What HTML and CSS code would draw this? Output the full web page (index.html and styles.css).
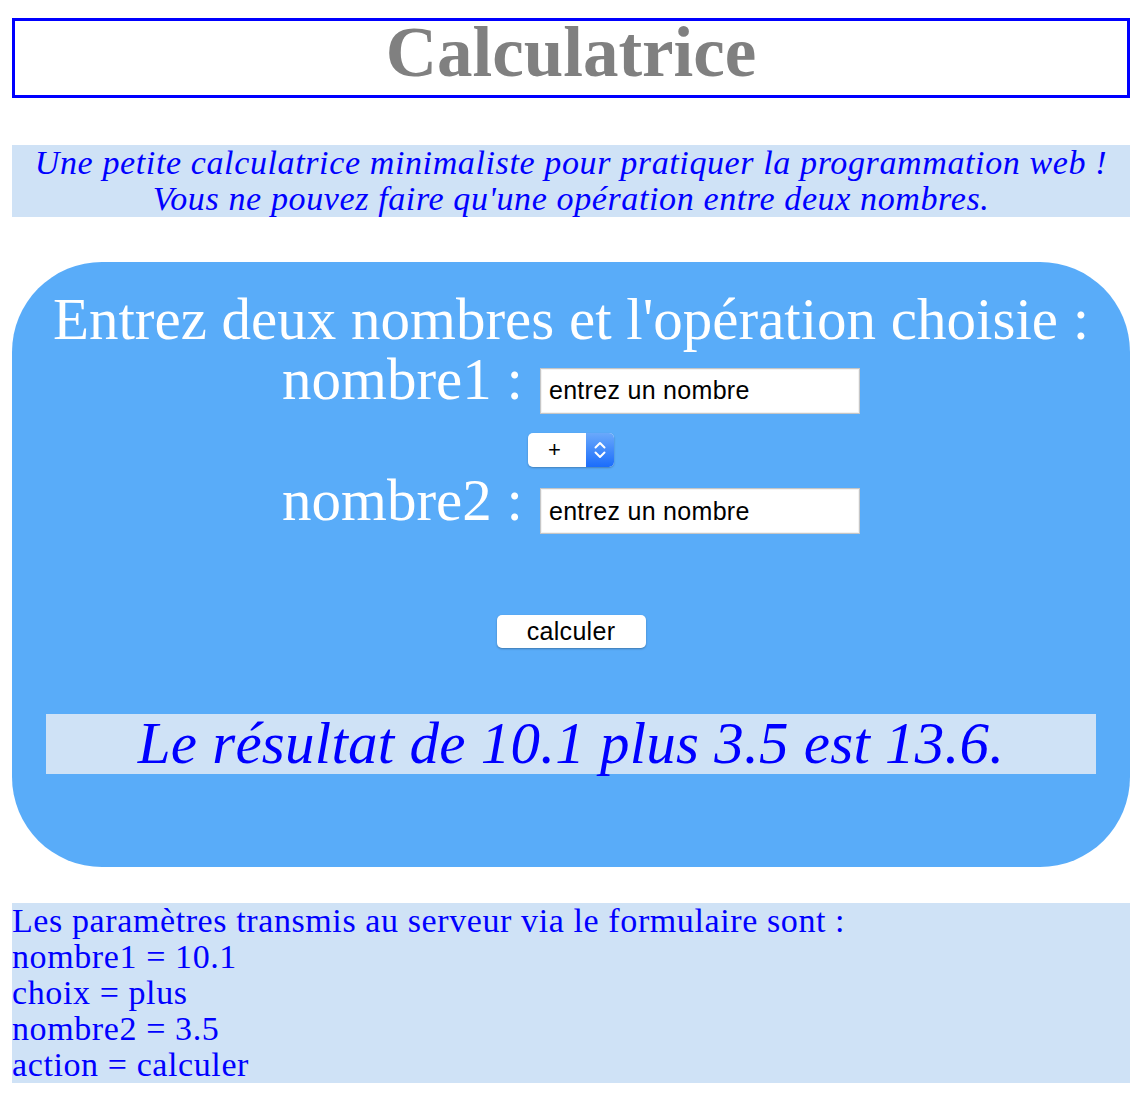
FILE: index.html
```html
<!DOCTYPE html>
<html lang="fr">
<head>
<meta charset="utf-8">
<title>Calculatrice</title>
<link rel="stylesheet" href="styles.css">
</head>
<body>
<h1 class="title">Calculatrice</h1>
<p class="intro">Une petite calculatrice minimaliste pour pratiquer la programmation web !<br>Vous ne pouvez faire qu'une opération entre deux nombres.</p>
<form class="panel">
  <div class="panel-title">Entrez deux nombres et l'opération choisie :</div>
  <div class="row row1">
    <label class="lbl" for="n1">nombre1 :</label>
    <input class="num" id="n1" type="text" value="entrez un nombre">
  </div>
  <div class="select-wrap">
    <select class="op"><option>+</option></select>
    <span class="arrows"><svg width="14" height="20" viewBox="0 0 14 20"><path d="M2.5 7.5 L7 3 L11.5 7.5 M2.5 12.5 L7 17 L11.5 12.5" fill="none" stroke="#fff" stroke-width="2" stroke-linecap="round" stroke-linejoin="round"/></svg></span>
  </div>
  <div class="row row2">
    <label class="lbl" for="n2">nombre2 :</label>
    <input class="num" id="n2" type="text" value="entrez un nombre">
  </div>
  <button type="button" class="btn">calculer</button>
  <div class="result">Le résultat de 10.1 plus 3.5 est 13.6.</div>
</form>
<div class="params">Les paramètres transmis au serveur via le formulaire sont :<br>nombre1 = 10.1<br>choix = plus<br>nombre2 = 3.5<br>action = calculer</div>
</body>
</html>
```

FILE: styles.css
```css
html, body {
  background: #ffffff;
}
body {
  margin: 0;
  padding: 18px 16px 20px 12px;
  font-family: "Liberation Serif", "Times New Roman", serif;
}
.title {
  margin: 0;
  border: 3px solid #0000ff;
  height: 74px;
  line-height: 63px;
  text-align: center;
  color: #808080;
  font-size: 71px;
  font-weight: bold;
}
.intro {
  margin: 47px 0 0;
  background: #cfe2f6;
  color: #0000ff;
  font-style: italic;
  font-size: 34px;
  letter-spacing: 0.62px;
  line-height: 36px;
  text-align: center;
}
.panel {
  margin-top: 45px;
  background: #59acf9;
  border-radius: 90px;
  padding: 27px 0 93px;
  display: flex;
  flex-direction: column;
  align-items: center;
}
.panel-title {
  color: #ffffff;
  font-size: 59px;
  line-height: 60px;
  white-space: nowrap;
}
.row {
  display: flex;
  align-items: baseline;
  gap: 17px;
}
.row2 {
  margin-top: 3px;
}
.lbl {
  color: #ffffff;
  font-size: 59px;
  line-height: 60px;
}
.num {
  box-sizing: border-box;
  width: 320px;
  height: 46px;
  margin: 0;
  padding: 0 8px;
  border: 1px solid #c6c6c6;
  box-shadow: inset 0 0 0 1px #f2f2f2;
  background: #ffffff;
  font-family: "Liberation Sans", Arial, sans-serif;
  font-size: 25px;
  letter-spacing: 0.3px;
  color: #000000;
}
.select-wrap {
  position: relative;
  margin-top: 19px;
  width: 86px;
  height: 34px;
  border-radius: 5px;
  box-shadow: 0 1px 2px rgba(0, 0, 0, 0.25);
}
.op {
  -webkit-appearance: none;
  appearance: none;
  box-sizing: border-box;
  width: 86px;
  height: 34px;
  margin: 0;
  padding: 0 0 0 20px;
  border: none;
  border-radius: 5px;
  background: #ffffff;
  font-family: "Liberation Sans", Arial, sans-serif;
  font-size: 22px;
  color: #000000;
}
.arrows {
  position: absolute;
  top: 0;
  right: 0;
  width: 28px;
  height: 34px;
  border-radius: 0 5px 5px 0;
  background: linear-gradient(#6aa9fb, #1b6dfb);
  display: flex;
  align-items: center;
  justify-content: center;
  pointer-events: none;
}
.btn {
  margin-top: 81px;
  width: 149px;
  height: 33px;
  padding: 0;
  border: none;
  border-radius: 5px;
  background: #ffffff;
  box-shadow: 0 1px 2px rgba(0, 0, 0, 0.3);
  font-family: "Liberation Sans", Arial, sans-serif;
  font-size: 25px;
  letter-spacing: 0.3px;
  line-height: 33px;
  color: #000000;
}
.result {
  align-self: stretch;
  margin: 66px 34px 0;
  height: 60px;
  background: #cfe2f6;
  color: #0000ff;
  font-style: italic;
  font-size: 59px;
  letter-spacing: 0.25px;
  line-height: 58px;
  text-align: center;
}
.params {
  margin-top: 36px;
  background: #cfe2f6;
  color: #0000ff;
  font-size: 34px;
  letter-spacing: 0.6px;
  line-height: 36px;
}
```
